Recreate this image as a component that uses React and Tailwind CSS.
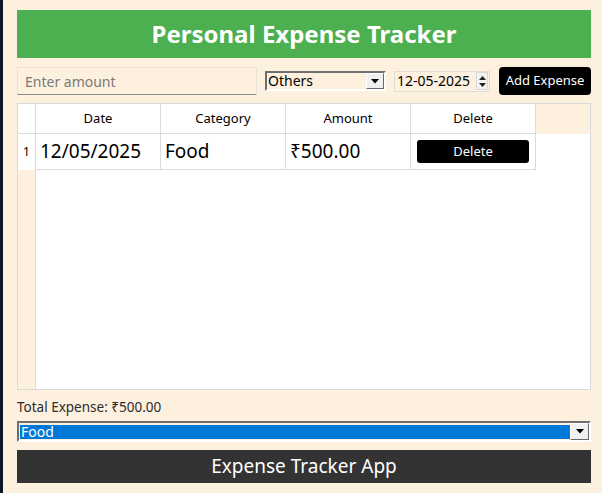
import React from "react";

const expenses = [{ date: "12/05/2025", category: "Food", amount: "₹500.00" }];

const ArrowBox = ({ className = "" }) => (
  <div
    className={`flex items-center justify-center bg-[#f0f0f0] border border-t-white border-l-white border-r-[#696969] border-b-[#696969] ${className}`}
  >
    <svg width="8" height="5" viewBox="0 0 8 5">
      <path d="M0 0H8L4 4.5Z" fill="#000" />
    </svg>
  </div>
);

const App = () => {
  return (
    <div className="flex h-[493px] w-[602px] overflow-hidden bg-[#fdf0df] font-['Noto_Sans',sans-serif]">
      {/* window edge */}
      <div className="w-[3px] shrink-0 bg-[#0a1724]" />

      <div className="flex w-[588px] flex-col pl-[14px] pt-[10px]">
        {/* Header */}
        <div className="flex h-[48px] items-center justify-center bg-[#4caf50]">
          <h1 className="text-[24px] font-bold text-white">Personal Expense Tracker</h1>
        </div>

        {/* Inputs */}
        <div className="mt-[8px] flex h-[30px] items-center">
          <div className="flex h-[28px] w-[240px] items-center border border-[#e8e2d8] border-b-[#8a8a8a] bg-[#fdf0df] px-[7px]">
            <span className="text-[14px] text-[#7a7a7a]">Enter amount</span>
          </div>
          <div className="ml-[8px] flex h-[20px] w-[121px] items-center border-2 border-t-[#6e6e6e] border-l-[#6e6e6e] border-r-white border-b-white bg-[#fdf0df]">
            <span className="flex-1 pl-[1px] text-[14px] leading-none text-black">Others</span>
            <ArrowBox className="h-[16px] w-[18px]" />
          </div>
          <div className="ml-[8px] flex h-[21px] w-[96px] items-center border border-[#e0dcd6] bg-[#fdf0df]">
            <span className="flex-1 pl-[2px] text-[14px] leading-none text-black">12-05-2025</span>
            <div className="mr-[1px] flex h-[18px] w-[12px] flex-col items-center justify-center gap-[3px] border border-[#d8d8d8] bg-[#f3f3f3]">
              <svg width="7" height="4" viewBox="0 0 7 4">
                <path d="M3.5 0L7 4H0Z" fill="#222" />
              </svg>
              <svg width="7" height="4" viewBox="0 0 7 4">
                <path d="M0 0H7L3.5 4Z" fill="#222" />
              </svg>
            </div>
          </div>
          <button className="ml-[9px] h-[28px] w-[92px] rounded-[4px] bg-black text-[13px] text-white">
            Add Expense
          </button>
        </div>

        {/* Table */}
        <div className="mt-[7px] flex h-[287px] flex-col border border-[#d9d9d9] bg-white">
          <div className="flex h-[30px]">
            <div className="w-[18px] border-r border-b border-[#dcdcdc] bg-white" />
            {["Date", "Category", "Amount", "Delete"].map((h) => (
              <div
                key={h}
                className="flex w-[125px] items-center justify-center border-r border-b border-[#dcdcdc] text-[13px] text-black"
              >
                {h}
              </div>
            ))}
            <div className="flex-1 bg-[#fdf0df]" />
          </div>

          <div className="flex flex-1">
            <div className="flex w-[18px] flex-col border-r border-[#dcdcdc]">
              {expenses.map((e, i) => (
                <div key={i} className="flex h-[36px] items-center justify-center bg-white text-[12px] text-black">
                  {i + 1}
                </div>
              ))}
              <div className="flex-1 bg-[#fdf0df]" />
            </div>
            <div className="flex flex-col">
              {expenses.map((e, i) => (
                <div key={i} className="flex h-[36px] border-b border-[#dcdcdc]">
                  <div className="flex w-[125px] items-center border-r border-[#dcdcdc] pl-[4px] text-[19px] text-black">
                    {e.date}
                  </div>
                  <div className="flex w-[125px] items-center border-r border-[#dcdcdc] pl-[4px] text-[19px] text-black">
                    {e.category}
                  </div>
                  <div className="flex w-[125px] items-center border-r border-[#dcdcdc] pl-[4px] text-[19px] text-black">
                    {e.amount}
                  </div>
                  <div className="flex w-[125px] items-center justify-center border-r border-[#dcdcdc]">
                    <button className="h-[23px] w-[112px] rounded-[3px] bg-black text-[13px] text-white">
                      Delete
                    </button>
                  </div>
                </div>
              ))}
            </div>
          </div>
        </div>

        {/* Total */}
        <p className="mt-[8px] text-[13.5px] leading-[18px] text-[#2b2b2b]">Total Expense: ₹500.00</p>

        {/* Category filter */}
        <div className="mt-[5px] flex h-[21px] items-center border-2 border-t-[#6e6e6e] border-l-[#6e6e6e] border-r-white border-b-white bg-[#fdf0df] pl-[1px]">
          <div className="flex h-[14px] flex-1 items-center bg-[#0078d7]">
            <span className="pl-[1px] text-[14px] leading-none text-white">Food</span>
          </div>
          <ArrowBox className="h-[17px] w-[19px]" />
        </div>

        {/* Footer */}
        <div className="mt-[8px] flex h-[33px] items-center justify-center bg-[#333333]">
          <span className="text-[19px] text-white">Expense Tracker App</span>
        </div>
      </div>
    </div>
  );
};

export default App;
